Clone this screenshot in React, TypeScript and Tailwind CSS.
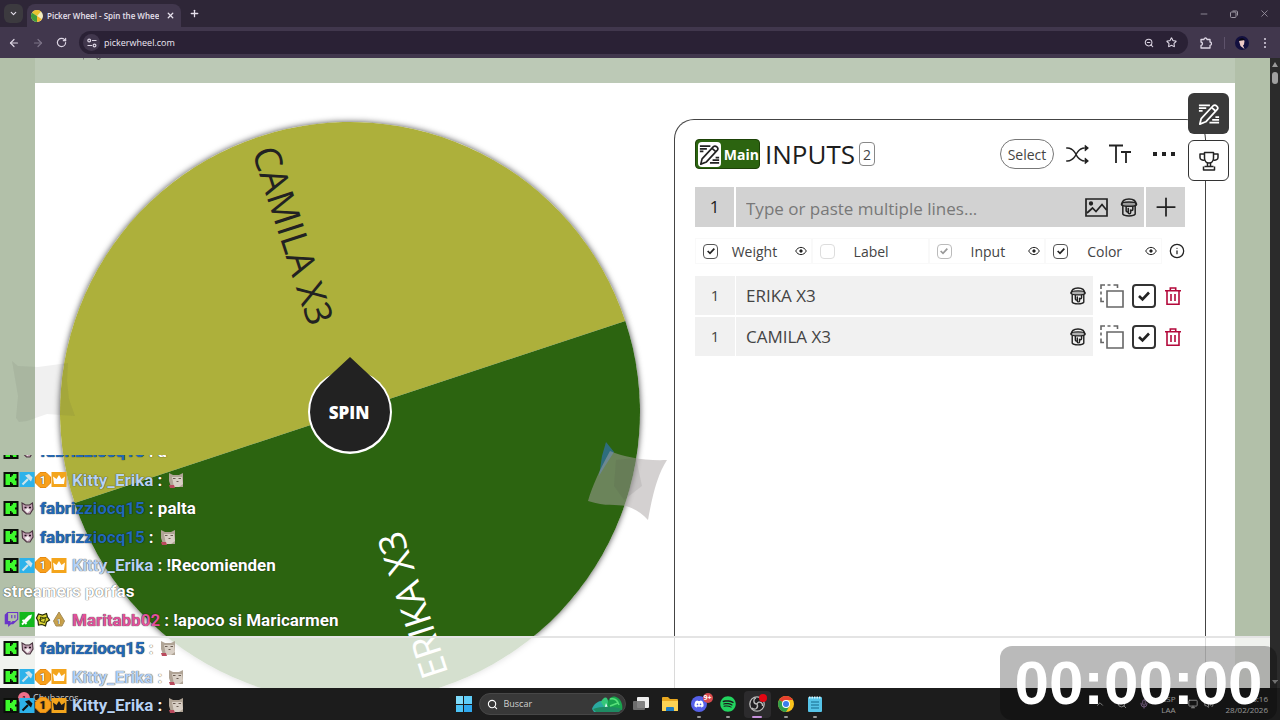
import { useState, type ReactNode } from "react";
import {
  ArrowLeft,
  ArrowRight,
  ChevronDown,
  ChevronUp,
  Info,
  Mic,
  Minus,
  Monitor,
  Plus,
  RotateCw,
  Search,
  Star,
  Volume2,
  X,
  ZoomOut,
} from "lucide-react";
import { BsShuffle } from "react-icons/bs";
import { FaDiscord, FaSpotify, FaTwitch } from "react-icons/fa";

function EditIcon({ className }: { className?: string }) {
  return (
    <svg className={className} viewBox="0 0 24 24" fill="none" stroke="currentColor" strokeWidth="1.9" strokeLinejoin="round">
      <path d="M1 2.500h12M1 5.500h8M1 8.500h4" />
      <path d="M19 15.500h4M15.500 18.500h7.500M12.500 21.500h10.500" />
      <path d="M3.500 17 16.500 3c2.500-2 6.500 1.500 4.500 4L8.500 20.500 2 23z" />
      <path d="m15 5 4.500 4" />
    </svg>
  );
}

function BucketIcon({ className }: { className?: string }) {
  return (
    <svg className={className} viewBox="0 0 18 20" fill="none" stroke="currentColor" strokeWidth="1.600" strokeLinecap="round">
      <path d="M1.500 7C1.500 3.500 4 1 9 1s7.500 2.500 7.500 6" />
      <path d="M1 6.500c0-3 16-3 16 0S1 9.500 1 6.500z" fill="currentColor" fillOpacity="0.300" />
      <path d="M2.500 8.500V17c1.500 2.500 11.500 2.500 13 0V8.500" />
      <path d="M6 9.500v4c0 1.500 2.200 1.500 2.200 0V11M8.200 11v4.500c0 1.500 2.500 1.500 2.500 0V12c.5 1.500 2.300 1.500 2.300 0V9.500" />
    </svg>
  );
}

function EyeIcon() {
  return (
    <svg className="h-3 w-3" viewBox="0 0 12 12" fill="none" stroke="#222">
      <path d="M0.700 6C3 1.200 9 1.200 11.300 6 9 10.800 3 10.800 0.700 6z" />
      <circle cx="6" cy="6" r="1.200" fill="#222" />
    </svg>
  );
}

function TrophyIcon() {
  return (
    <svg className="h-5 w-5" viewBox="0 0 20 20" fill="none" stroke="#222" strokeWidth="1.500" strokeLinejoin="round">
      <path d="M5.500 1.500h9V7c0 3-2 5-4.500 5S5.500 10 5.500 7z" />
      <path d="M5.500 3H1v3.500C1 8.500 3 9.500 5.800 9M14.500 3H19v3.500c0 2-2 3-4.800 2.500" />
      <path d="M8.500 12v3.500M11.500 12v3.500M5.500 15.500h9M4.500 15.500V19h11v-3.500" />
    </svg>
  );
}

function DuplicateIcon() {
  return (
    <svg className="h-6 w-6" viewBox="0 0 24 24" fill="none" stroke="#666" strokeWidth="1.600">
      <path d="M1 5V1h4M7.500 1h3M13.500 1h4v3M1 7.500v3M1 13.500v4h3" />
      <path d="M7 7h16v16H7z" />
    </svg>
  );
}

function TrashIcon() {
  return (
    <svg className="h-[18px] w-4" viewBox="0 0 16 18" fill="none" stroke="#b3093b" strokeWidth="1.600">
      <path d="M0 3.800h16M5.300 3.500V1h5.400v2.500M2 4v13.200h12V4M6 7v7M10 7v7" />
    </svg>
  );
}

type CheckProps = { label: string; checked: boolean; box: string; tick: string };

function Check({ label, checked, box, tick }: CheckProps) {
  const [on, setOn] = useState(checked);
  return (
    <span className="grid shrink-0 place-items-center">
      <input
        type="checkbox"
        aria-label={label}
        checked={on}
        onChange={() => setOn(!on)}
        className={`col-start-1 row-start-1 appearance-none bg-white ${box}`}
      />
      {on && (
        <svg className={`pointer-events-none col-start-1 row-start-1 ${tick}`} viewBox="0 0 12 12" fill="none" stroke="currentColor" strokeWidth="2.600">
          <path d="m1 6 3.500 3.500L11 2.500" />
        </svg>
      )}
    </span>
  );
}

/* ---------- browser chrome ---------- */

function Favicon() {
  return (
    <svg className="h-3 w-3 shrink-0" viewBox="0 0 12 12">
      <circle cx="6" cy="6" r="6" fill="#f3ecc0" />
      <path d="M6 6 1 2.700A6 6 0 0 1 10 1.500z" fill="#e8c22f" />
      <path d="M6 6v6A6 6 0 0 1 1 2.700z" fill="#3f9a3a" />
      <path d="M6 6l5 3.300A6 6 0 0 1 6 12z" fill="#f2b92c" />
    </svg>
  );
}

function TabStrip() {
  return (
    <div className="flex h-[27px] shrink-0 items-center bg-[#2e2637] text-[#e6e0ec]">
      <button aria-label="Search tabs" className="ml-1 grid h-[19px] w-[19px] place-items-center rounded-md bg-[#3c3a3f]">
        <ChevronDown className="h-[9px] w-[9px]" strokeWidth={3} />
      </button>
      <div className="ml-1 flex h-[23px] w-[154px] items-center self-end rounded-t-lg bg-[#41374d] pl-1">
        <Favicon />
        <span className="ml-1 w-[112px] overflow-hidden whitespace-nowrap text-[8px] font-semibold">
          Picker Wheel - Spin the Wheel
        </span>
        <button aria-label="Close tab" className="ml-[3px] grid h-4 w-4 place-items-center">
          <X className="h-[9px] w-[9px]" strokeWidth={3.500} />
        </button>
      </div>
      <button aria-label="New tab" className="ml-[5px] grid h-4 w-4 place-items-center">
        <Plus className="h-[11px] w-[11px]" strokeWidth={2.800} />
      </button>
      <div className="ml-auto mr-[10px] flex items-center gap-[21px] text-[#9d97a4]">
        <button aria-label="Minimize"><Minus className="h-[10px] w-[10px]" /></button>
        <button aria-label="Restore">
          <svg className="h-2 w-2" viewBox="0 0 8 8" fill="none" stroke="currentColor">
            <rect x="0.500" y="2" width="5.500" height="5.500" rx="1" />
            <path d="M2.500 1h4a1 1 0 0 1 1 1v3.500" />
          </svg>
        </button>
        <button aria-label="Close"><X className="h-[11px] w-[11px]" strokeWidth={1.800} /></button>
      </div>
    </div>
  );
}

function Toolbar() {
  return (
    <div className="flex h-[31px] shrink-0 items-center bg-[#41374d] text-[#ddd6e4]">
      <div className="flex items-center gap-3 pl-2">
        <button aria-label="Back"><ArrowLeft className="h-3 w-3" strokeWidth={2.400} /></button>
        <button aria-label="Forward" className="text-[#7d7488]"><ArrowRight className="h-3 w-3" strokeWidth={2.400} /></button>
        <button aria-label="Reload"><RotateCw className="h-[11px] w-[11px]" strokeWidth={2.600} /></button>
      </div>
      <div className="ml-3 flex h-[23px] flex-1 items-center rounded-full bg-[#2a2135] pl-1 pr-[11px]">
        <span className="grid h-[17px] w-[17px] place-items-center rounded-full bg-[#41374d]">
          <svg className="h-[10px] w-[10px]" viewBox="0 0 10 10" fill="none" stroke="currentColor" strokeWidth="1.200">
            <circle cx="2.200" cy="2.500" r="1.400" />
            <path d="M5 2.500h4.500M0.500 7.500H5" />
            <circle cx="7.500" cy="7.500" r="1.400" />
          </svg>
        </span>
        <input aria-label="Address" defaultValue="pickerwheel.com" className="ml-1 min-w-0 flex-1 bg-transparent text-[9px] font-medium text-[#eee8f4] outline-none" />
        <ZoomOut className="mr-3 h-[10px] w-[10px]" strokeWidth={2.500} />
        <Star className="h-[11px] w-[11px]" strokeWidth={2.400} />
      </div>
      <button aria-label="Extensions" className="ml-3">
        <svg className="h-3 w-3" viewBox="0 0 12 12" fill="none" stroke="currentColor" strokeWidth="1.300" strokeLinejoin="round">
          <path d="M1 2.500h3c0-2 3-2 3 0h3V5c2 .3 2 3 0 3.300V11H1V8.500c2-.5 2-3 0-3.500z" />
        </svg>
      </button>
      <span className="ml-3 h-3 w-px bg-[#5e536b]" />
      <svg className="ml-[10px] h-[14px] w-[14px]" viewBox="0 0 14 14">
        <circle cx="7" cy="7" r="7" fill="#13103f" />
        <path d="M4 5c1-3 5-2 5.500 0L9 8.500l-1 1 1.500 3.500-4-3z" fill="#ecc9c6" />
        <path d="M3.500 5c0-3 5-4 6.500-1L7 4.500z" fill="#0a0712" />
      </svg>
      <button aria-label="Menu" className="ml-3 mr-[11px] grid w-2 justify-items-center gap-[2px]">
        <span className="h-[2px] w-[2px] rounded-full bg-current" />
        <span className="h-[2px] w-[2px] rounded-full bg-current" />
        <span className="h-[2px] w-[2px] rounded-full bg-current" />
      </button>
    </div>
  );
}

/* ---------- wheel ---------- */

function Wheel() {
  return (
    <svg className="-m-[10px] h-[600px] w-[600px] shrink-0" viewBox="-300 -300 600 600">
      <circle r="290" fill="#fff" style={{ filter: "drop-shadow(0 0 3px rgba(0,0,0,.7))" }} />
      <g transform="rotate(-18.300)">
        <path d="M-290 0a290 290 0 0 1 580 0z" fill="#adb03b" />
        <path d="M-290 0a290 290 0 0 0 580 0z" fill="#2c6410" />
      </g>
      <g fontFamily="Open Sans, sans-serif" fontSize="37">
        <text transform="rotate(72)" x="-278" y="13" fill="#222">CAMILA X3</text>
        <text transform="rotate(252)" x="-279" y="13" fill="#fff">ERIKA X3</text>
      </g>
      <circle r="42" fill="#fff" />
      <path d="M0-55 29-28A40 40 0 1 1-29-28z" fill="#222" />
      <text x="-1" y="7" textAnchor="middle" fill="#fff" fontFamily="Open Sans, sans-serif" fontSize="17" fontWeight="800">SPIN</text>
    </svg>
  );
}

/* ---------- inputs panel ---------- */

function PanelHeader() {
  return (
    <div className="flex h-[30px] items-center">
      <button className="flex h-[30px] w-[65px] items-center rounded-sm border border-[#1d4208] bg-[#2c6410] pl-[2px] text-[14px] font-bold text-white">
        <span className="mr-[3px] grid h-[25px] w-[26px] place-items-center rounded-sm bg-white text-[#222]">
          <EditIcon className="h-[21px] w-[21px]" />
        </span>
        Main
      </button>
      <h2 className="ml-[5px] text-[26px] font-medium leading-[30px] text-[#1d1d1d]">INPUTS</h2>
      <span className="ml-1 grid h-6 w-4 place-items-center rounded border border-[#888] text-[14px] text-[#444]">2</span>
      <button className="ml-auto h-[30px] w-[54px] rounded-full border border-[#777] text-[14px] text-[#444]">Select</button>
      <button aria-label="Shuffle" className="ml-3"><BsShuffle className="h-[23px] w-[23px]" /></button>
      <button aria-label="Text size" className="ml-5">
        <svg className="h-[22px] w-[22px]" viewBox="0 0 22 22" fill="none" stroke="#222" strokeWidth="1.800">
          <path d="M0 2.500h14M7 2.500V20M12 9h10M17 9v11" />
        </svg>
      </button>
      <button aria-label="More" className="ml-[22px] mr-[10px] flex gap-[5px]">
        <span className="h-1 w-1 bg-[#222]" />
        <span className="h-1 w-1 bg-[#222]" />
        <span className="h-1 w-1 bg-[#222]" />
      </button>
    </div>
  );
}

function NewEntry() {
  return (
    <div className="mt-[18px] flex h-10 gap-[2px] text-[#222]">
      <span className="grid w-[39px] place-items-center bg-[#d2d2d2] text-[17px] font-medium">1</span>
      <div className="flex flex-1 items-center bg-[#d2d2d2] pl-[10px] pr-[6px]">
        <input aria-label="New entry" placeholder="Type or paste multiple lines..." className="min-w-0 flex-1 bg-transparent pt-1 text-[17px] font-medium outline-none placeholder:text-[#787878]" />
        <button aria-label="Add image">
          <svg className="h-[19px] w-[23px]" viewBox="0 0 23 19" fill="none" stroke="#222" strokeWidth="1.700">
            <path d="M1 1h21v17H1z" />
            <circle cx="6" cy="5.500" r="1.300" fill="#222" />
            <path d="m2 15 5.500-5 3.500 3.500L17 6.500l4.500 5.500" />
          </svg>
        </button>
        <button aria-label="Color" className="ml-3"><BucketIcon className="h-[19px] w-[18px]" /></button>
      </div>
      <button aria-label="Add" className="grid w-[39px] place-items-center bg-[#d2d2d2]">
        <Plus className="h-[30px] w-[30px]" strokeWidth={1.400} />
      </button>
    </div>
  );
}

const columns = [
  { name: "Weight", checked: true, eye: true, box: "border-[#555]", tone: "text-[#222]" },
  { name: "Label", checked: false, eye: false, box: "border-[#ddd]", tone: "text-[#222]" },
  { name: "Input", checked: true, eye: true, box: "border-[#bbb]", tone: "text-[#999]" },
  { name: "Color", checked: true, eye: true, box: "border-[#555]", tone: "text-[#222]" },
];

function ColumnToggles() {
  return (
    <div className="mt-[11px] flex h-[26px] items-center">
      {columns.map((c) => (
        <div key={c.name} className={`flex h-full flex-1 items-center border border-[#f9f9f9] pl-[7px] pr-1 ${c.tone}`}>
          <Check label={c.name} checked={c.checked} box={`h-[15px] w-[15px] rounded-sm border ${c.box}`} tick="h-2 w-2" />
          <span className="flex-1 pr-1 text-center text-[14px] text-[#444]">{c.name}</span>
          {c.eye ? <button aria-label={`Show ${c.name}`}><EyeIcon /></button> : <span className="w-3" />}
        </div>
      ))}
      <button aria-label="Help" className="ml-[7px]"><Info className="h-4 w-4" strokeWidth={1.900} /></button>
    </div>
  );
}

function EntryRow({ name }: { name: string }) {
  return (
    <li className="flex h-[39px] items-center">
      <span className="grid h-full w-10 place-items-center bg-[#f1f1f1] text-[15px] text-[#444]">1</span>
      <div className="ml-px flex h-full flex-1 items-center bg-[#f1f1f1] pl-[10px] pr-[7px]">
        <input aria-label="Entry" defaultValue={name} className="min-w-0 flex-1 bg-transparent text-[17px] text-[#444] outline-none" />
        <button aria-label="Color"><BucketIcon className="h-[18px] w-4" /></button>
      </div>
      <button aria-label="Duplicate" className="ml-[7px]"><DuplicateIcon /></button>
      <span className="ml-2">
        <Check label={`Include ${name}`} checked box="h-6 w-6 rounded border-2 border-[#333]" tick="h-3 w-3 text-[#222]" />
      </span>
      <button aria-label="Delete" className="ml-[9px] mr-1"><TrashIcon /></button>
    </li>
  );
}

function InputsPanel() {
  return (
    <section className="ml-[34px] mr-[29px] flex-1 self-stretch rounded-t-[20px] border border-b-0 border-[#444] bg-white px-5 pt-[19px] text-[#222]">
      <PanelHeader />
      <NewEntry />
      <ColumnToggles />
      <ul className="mt-3 grid gap-[2px]">
        <EntryRow name="ERIKA X3" />
        <EntryRow name="CAMILA X3" />
      </ul>
    </section>
  );
}

function Page() {
  return (
    <div className="flex min-h-0 flex-1 bg-[#b2c0a9]">
      <div className="relative flex min-w-0 flex-1 flex-col overflow-hidden px-[35px]">
        <div className="h-[25px] shrink-0 bg-[#bcc9b6]">
          <svg className="ml-12 h-[2px] w-5" viewBox="0 0 20 2" fill="none" stroke="#444"><path d="M0 0v1.500M14 0c0 2 3 2 3 0" /></svg>
        </div>
        <main className="relative flex min-h-0 flex-1 items-start bg-white pl-[25px] pt-9">
          <div className="flex shrink-0 pt-[3px]"><Wheel /></div>
          <InputsPanel />
          <div className="absolute right-[6px] top-[10px] grid gap-[6px]">
            <button aria-label="Inputs" className="grid h-[41px] w-[41px] place-items-center rounded-md bg-[#3a3a3a] text-white">
              <EditIcon className="h-[22px] w-[22px]" />
            </button>
            <button aria-label="Results" className="grid h-[41px] w-[41px] place-items-center rounded-md border border-[#333] bg-white">
              <TrophyIcon />
            </button>
          </div>
        </main>
        <div className="absolute inset-x-0 bottom-0 h-[52px] border-t-2 border-[#e4e4e4] bg-white/80" />
      </div>
      <div className="flex w-[10px] shrink-0 flex-col items-center bg-[#2b2b2b] py-1">
        <svg className="h-[5px] w-[6px]" viewBox="0 0 6 5"><path d="M3 0l3 5H0z" fill="#9a9a9a" /></svg>
        <span className="mt-[5px] h-3 w-[6px] rounded-full bg-[#a0a0a0]" />
        <svg className="mt-auto h-1 w-[6px]" viewBox="0 0 6 4"><path d="M0 0h6L3 4z" fill="#9a9a9a" /></svg>
      </div>
    </div>
  );
}

/* ---------- taskbar ---------- */

function TaskButton({ label, children, active }: { label: string; children: ReactNode; active?: boolean }) {
  return (
    <button aria-label={label} className={`relative grid h-[27px] w-[27px] place-items-center rounded ${active ? "bg-[#2c2b2d]" : ""}`}>
      {children}
    </button>
  );
}

function Dot() {
  return <span className="absolute bottom-0 h-[2px] w-1 rounded-full bg-[#999]" />;
}

function Taskbar() {
  return (
    <footer className="grid h-8 shrink-0 grid-cols-[1fr_auto_1fr] items-center bg-[#1c1c1c] text-white">
      <div className="flex items-start self-start pl-[18px] pt-1 text-[9px] leading-[12px] text-[#ccc]">
        <span className="mr-[3px] grid h-3 w-3 place-items-center rounded-full bg-[#f0708a] text-[8px] text-black">1</span>
        Chubascos
      </div>
      <div className="flex items-center gap-[2px] pl-1">
        <button aria-label="Start" className="mr-[5px] grid h-4 w-4 grid-cols-2 gap-px">
          <span className="bg-[#7fdcfb]" />
          <span className="bg-[#5fcdf8]" />
          <span className="bg-[#4cc3f5]" />
          <span className="bg-[#2fa8ee]" />
        </button>
        <label className="flex h-[22px] w-[147px] items-center rounded-full border border-[#474747] bg-[#383838] pl-[7px] pr-[2px]">
          <Search className="h-[11px] w-[11px]" strokeWidth={2.400} />
          <input aria-label="Buscar" placeholder="Buscar" className="ml-[6px] min-w-0 flex-1 bg-transparent text-[9px] font-medium outline-none placeholder:text-[#d0d0d0]" />
          <svg className="h-4 w-[31px]" viewBox="0 0 31 16">
            <path d="M0 13C2 7 8 4 12 5L15 16H2z" fill="#2aa9a0" />
            <path d="M9 6c3-7 8-6 7 3l-2 5z" fill="#35c77a" />
            <path d="M16 14C14 5 18-1 24 1c6 2 7 10 6 13z" fill="#18a34d" />
            <path d="M18 3c4-1 8 1 9 6M18 10l8-3" stroke="#58e07a" strokeWidth="1.500" fill="none" />
            <path d="M14 7l-2 7h5z" fill="#dffcf6" />
            <path d="M1 13c8-3 20-3 29 0l-3 3H4z" fill="#1e8b63" />
          </svg>
        </label>
        <TaskButton label="Task view">
          <svg className="h-4 w-4" viewBox="0 0 16 16">
            <rect x="4" y="1" width="12" height="11" rx="1" fill="#eee" />
            <rect y="5" width="12" height="9" rx="1" fill="#777" fillOpacity="0.900" />
          </svg>
        </TaskButton>
        <TaskButton label="Explorer">
          <svg className="h-4 w-4" viewBox="0 0 16 16">
            <path d="M0 2a1 1 0 0 1 1-1h5l2 2h7a1 1 0 0 1 1 1v11H0z" fill="#e9a820" />
            <path d="M0 5h16v9a1 1 0 0 1-1 1H1a1 1 0 0 1-1-1z" fill="#fcd354" />
            <path d="M4 15v-3a1 1 0 0 1 1-1h6a1 1 0 0 1 1 1v3z" fill="#1f7cc0" />
          </svg>
        </TaskButton>
        <TaskButton label="Discord">
          <span className="grid h-4 w-4 place-items-center rounded-full bg-[#5560e8]"><FaDiscord className="h-[10px] w-[10px]" /></span>
          <span className="absolute right-0 top-[2px] grid h-[10px] w-[10px] place-items-center rounded-full bg-[#d84a4f] text-[7px] font-bold">9+</span>
          <Dot />
        </TaskButton>
        <TaskButton label="Spotify"><FaSpotify className="h-4 w-4 text-[#22d45f]" /><Dot /></TaskButton>
        <TaskButton label="OBS" active>
          <svg className="h-4 w-4" viewBox="0 0 16 16" fill="none" stroke="#bbb" strokeWidth="1.300">
            <circle cx="8" cy="8" r="7.200" fill="#201f22" />
            <path d="M8 8C4 8 4 3 7 2M8 8c2-4 6-1 5.500 2M8 8c2 4-2 6.500-5 4" />
          </svg>
          <span className="absolute right-1 top-[3px] h-2 w-2 rounded-full bg-[#e30613]" />
          <span className="absolute bottom-0 h-[2px] w-[10px] rounded-full bg-[#c792dc]" />
        </TaskButton>
        <TaskButton label="Chrome">
          <svg className="h-4 w-4" viewBox="0 0 16 16">
            <circle cx="8" cy="8" r="8" fill="#fbc31c" />
            <path d="M8 8 1.100 4A8 8 0 0 1 14.900 4L8 4z" fill="#e5402f" />
            <path d="M1.100 4A8 8 0 0 0 8 16l3.500-6L8 8z" fill="#2f9e4c" />
            <circle cx="8" cy="8" r="4" fill="#fff" />
            <circle cx="8" cy="8" r="3" fill="#3b7ded" />
          </svg>
          <Dot />
        </TaskButton>
        <TaskButton label="Notepad">
          <svg className="h-4 w-[14px]" viewBox="0 0 14 16">
            <rect y="1" width="14" height="15" rx="1" fill="#56c4e8" />
            <path d="M1 1.500h12" stroke="#d8f4fc" strokeWidth="2" strokeDasharray="1.500 1" />
            <path d="M3 6h8M3 9h8M3 12h8" stroke="#15698c" />
          </svg>
          <Dot />
        </TaskButton>
      </div>
      <div className="flex items-center justify-end pr-3 text-[8px] leading-[11px] text-[#ccc]">
        <ChevronUp className="mr-3 h-[10px] w-[10px]" />
        <Search className="mr-3 h-[10px] w-[10px]" />
        <Mic className="mr-3 h-[10px] w-[10px] text-[#b08bc0]" />
        <span className="mr-3 text-right">ESP<br />LAA</span>
        <Monitor className="mr-[6px] h-[10px] w-[10px]" />
        <Volume2 className="mr-3 h-[10px] w-[10px]" />
        <span className="text-right">16:16<br />28/02/2026</span>
      </div>
    </footer>
  );
}

/* ---------- stream overlays ---------- */

function KickBadge() {
  return (
    <svg className="h-[15px] w-4" viewBox="0 0 15 15">
      <path d="M0 0h15v15H0z" fill="#0a0f08" />
      <path d="M2 2h4.500v3H8V3.500h1.500V2H13v4.500h-1.500v2H13V13H9.500v-1.500H8V10H6.500v3H2z" fill="#3dfb2c" />
    </svg>
  );
}

function CatBadge() {
  return (
    <svg className="h-[15px] w-4" viewBox="0 0 15 15">
      <path d="m2.500 2 3.500 2h4l3-2 .5 6-3 5H7L3 9z" fill="#c3a2b4" stroke="#4a3540" strokeWidth="1.100" />
      <path d="m5 9 3 3 3-3-3-2z" fill="#f3f0f0" />
      <path d="M5 6.500h2M9.500 6.500h2" stroke="#1c1018" strokeWidth="1.600" />
    </svg>
  );
}

function HammerBadge({ dark }: { dark?: boolean }) {
  return (
    <svg className="h-[15px] w-4" viewBox="0 0 15 15">
      <path d="M0 0h15v15H0z" fill="#2db2ea" />
      <path d="m3 12.500 5.500-5.500" stroke={dark ? "#111" : "#cfe3ea"} strokeWidth="2.200" />
      <path d="m5.500 3.500 4-1.500 3.500 3.500-1.500 4z" fill={dark ? "#111" : "#cfe3ea"} />
    </svg>
  );
}

function CoinBadge({ dark }: { dark?: boolean }) {
  return (
    <svg className="h-4 w-4" viewBox="0 0 16 16">
      <path d="M5 .5h6L15.500 5v6L11 15.500H5L.5 11V5z" fill="#f9a01b" stroke="#e58a10" />
      <text x="8" y="12" textAnchor="middle" fontSize="11" fontWeight="700" fill={dark ? "#1c1c1c" : "#fff"}>1</text>
    </svg>
  );
}

function CrownBadge({ dark }: { dark?: boolean }) {
  return (
    <svg className="h-[15px] w-4" viewBox="0 0 15 15">
      <path d="M0 0h15v15H0z" fill="#f4a51c" />
      <path d="M1.500 4.500 5 7l2.500-4L10 7l3.500-2.500-1 7.500h-10z" fill={dark ? "#1c1c1c" : "#fff"} />
    </svg>
  );
}

function TwitchBadge() {
  return (
    <span className="grid h-[15px] w-4 place-items-center text-[#6a35c8]">
      <FaTwitch className="h-[15px] w-[15px]" />
    </span>
  );
}

function SwordBadge() {
  return (
    <svg className="h-[15px] w-4" viewBox="0 0 15 15">
      <path d="M0 0h15v15H0z" fill="#12b81d" />
      <path d="m12.500 2.500-1 3.500-5 5L4 8.500l5-5z" fill="#fff" />
      <path d="m3 8 4 4M2.500 12.500l2.500-2.500" stroke="#fff" strokeWidth="1.800" />
    </svg>
  );
}

function FlowerBadge() {
  return (
    <svg className="h-[15px] w-4" viewBox="0 0 15 15">
      <path d="m3 2 4 1 4-1.500 1 3.500 2 3-3 2-1 4-3.500-1.500L3 13l-.5-4L1 6z" fill="#d9d234" stroke="#222806" strokeWidth="1.200" />
      <path d="m5 5 5 1.500-1 4-4-1zM3.500 8l8-3" fill="none" stroke="#3d4508" />
    </svg>
  );
}

function DropBadge() {
  return (
    <svg className="h-[15px] w-4" viewBox="0 0 15 15">
      <path d="M7.500 0 13 9l-2.500 5h-6L2 9z" fill="#c9a24b" stroke="#a38a55" />
      <text x="7.500" y="12" textAnchor="middle" fontSize="8" fontWeight="700" fill="#fff">1</text>
    </svg>
  );
}

function CatEmote() {
  return (
    <svg className="ml-[2px] h-4 w-4" viewBox="0 0 16 16">
      <path d="m1 1 4 2h6l4-2v14H3L1 9z" fill="#b0a496" />
      <path d="M4 5h10l1 7-4 3H6z" fill="#d8cfc5" />
      <path d="M5 6.500h2.500M10.500 6.500H13M8.500 9.500h2" stroke="#6a5c52" />
      <path d="M1 13h5l1 3H2z" fill="#b94a5d" />
    </svg>
  );
}

type LineProps = { badges: ReactNode; user: string; color: string; children: ReactNode };

function ChatLine({ badges, user, color, children }: LineProps) {
  return (
    <div className="flex items-center leading-[26px]">
      {badges}
      <span className={`ml-[5px] ${color}`}>{user}</span>
      <span className="ml-1 whitespace-pre">: </span>
      {children}
    </div>
  );
}

function FabLine({ children }: { children: ReactNode }) {
  return <ChatLine badges={<><KickBadge /><CatBadge /></>} user="fabrizziocq15" color="text-[#2268b8]">{children}</ChatLine>;
}

function KittyLine({ children, dark }: { children: ReactNode; dark?: boolean }) {
  return (
    <ChatLine badges={<><KickBadge /><HammerBadge dark={dark} /><CoinBadge dark={dark} /><CrownBadge dark={dark} /></>} user="Kitty_Erika" color="text-[#b7d1f3]">
      {children}
    </ChatLine>
  );
}

function Chat() {
  return (
    <aside className="absolute bottom-[2px] left-0 flex h-[263px] flex-col justify-end overflow-hidden pl-[3px] pr-2 font-['Roboto',sans-serif] text-[17px] font-bold text-white [text-shadow:0_0_1px_rgba(0,0,0,.6),0_0_1px_rgba(0,0,0,.5)]">
      <div className="flex h-[280px] shrink-0 flex-col justify-between">
        <FabLine>a</FabLine>
        <KittyLine><CatEmote /></KittyLine>
        <FabLine>palta</FabLine>
        <FabLine><CatEmote /></FabLine>
        <div>
          <KittyLine>!Recomienden</KittyLine>
          <p className="leading-[26px]">streamers porfas</p>
        </div>
        <ChatLine badges={<><TwitchBadge /><SwordBadge /><FlowerBadge /><DropBadge /></>} user="Maritabb02" color="text-[#e0529c]">
          !apoco si Maricarmen
        </ChatLine>
        <FabLine><CatEmote /></FabLine>
        <KittyLine><CatEmote /></KittyLine>
        <KittyLine dark><CatEmote /></KittyLine>
      </div>
    </aside>
  );
}

function Tape() {
  return (
    <>
      <svg className="pointer-events-none absolute left-[10px] top-[358px] h-[66px] w-[70px]" viewBox="0 0 70 66">
        <path d="M2 3l6 5 20 1 30-4-1 18 2 18 6 17-28-2-20 7-8 1-3-4 2-22z" fill="#444" fillOpacity="0.080" />
      </svg>
      <svg className="pointer-events-none absolute left-[586px] top-[438px] h-[86px] w-[84px]" viewBox="0 0 84 86">
        <path d="M20 4l8 10-9 14-6 10 3-20z" fill="#2f6f9a" fillOpacity="0.800" />
        <path d="M24 13c14 6 34 10 57 9-9 14-14 32-19 60-6-7-13-11-22-14-10-2-20 1-38-5 4-14 12-32 22-50z" fill="#aaa4a4" fillOpacity="0.500" />
        <path d="M30 22l20-2 6 28-18 14-10-14z" fill="#444" fillOpacity="0.100" />
      </svg>
    </>
  );
}

function Timer() {
  return (
    <div className="absolute bottom-0 right-[3px] grid h-[74px] w-[277px] place-items-center rounded-xl bg-black/27 font-['Liberation_Sans',sans-serif] text-[62px] font-bold leading-none text-white">
      <time>00:00:00</time>
    </div>
  );
}

export default function App() {
  return (
    <div className="relative flex h-screen flex-col overflow-hidden font-['Open_Sans',sans-serif]">
      <TabStrip />
      <Toolbar />
      <Page />
      <Taskbar />
      <Tape />
      <Chat />
      <Timer />
    </div>
  );
}
